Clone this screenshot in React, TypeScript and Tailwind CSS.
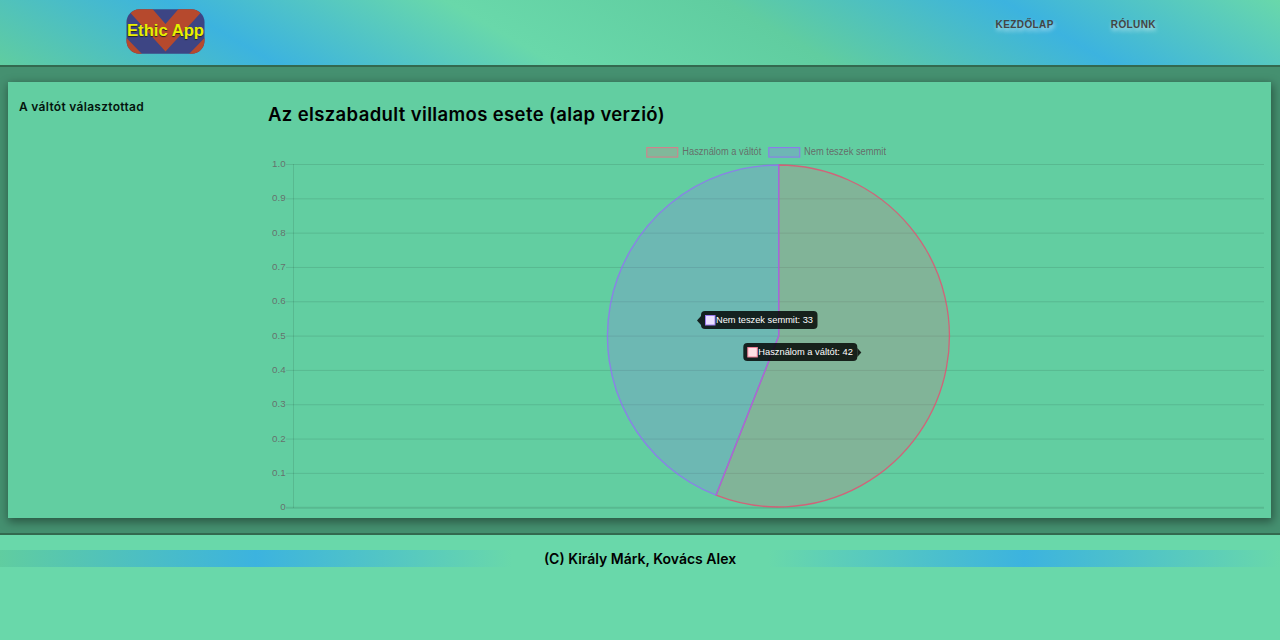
const ticks = ['1.0', '0.9', '0.8', '0.7', '0.6', '0.5', '0.4', '0.3', '0.2', '0.1', '0'];

function Logo() {
  return (
    <svg width="79" height="45" viewBox="0 0 79 45">
      <defs>
        <clipPath id="badge"><rect x="0.5" y="0.3" width="78" height="44.5" rx="13" /></clipPath>
      </defs>
      <g clipPath="url(#badge)">
        <rect width="79" height="45" fill="#3d4584" />
        <path d="M4.5 4L8.5 0H26.5L39.5 15L52.5 0H70.5L74.5 4L39.5 42.5Z" fill="#b6492d" />
        <path d="M0 28.5L16 45H0ZM79 28.5L63 45H79Z" fill="#b6492d" />
      </g>
      <text x="1" y="27" textLength="77" lengthAdjust="spacingAndGlyphs" fill="#e8f000" fontSize="17" fontWeight="700" className="font-['Liberation_Sans',sans-serif] [text-shadow:0px_1px_1px_#222]">Ethic App</text>
    </svg>
  );
}

function Tooltip({ x, y, w, label, fill, stroke, side }: { x: number; y: number; w: number; label: string; fill: string; stroke: string; side: 'left' | 'right' }) {
  const arrow = side === 'left'
    ? `M${x} ${y + 5}l-4 4.5l4 4.5Z`
    : `M${x + w} ${y + 5}l4 4.5l-4 4.5Z`;
  return (
    <g>
      <rect x={x} y={y} width={w} height="18" rx="4" fill="#000" fillOpacity="0.82" />
      <path d={arrow} fill="#000" fillOpacity="0.82" />
      <rect x={x + 4.5} y={y + 4.5} width="9.5" height="9.5" fill={fill} stroke={stroke} />
      <text x={x + 15} y={y + 11.6} textLength={w - 19.5} lengthAdjust="spacingAndGlyphs" fontSize="9.8" fill="#fff">{label}</text>
    </g>
  );
}

function Chart() {
  return (
    <svg width="1002" height="378" viewBox="264 138 1002 378" className="block font-['Liberation_Sans',sans-serif]">
      <g stroke="#000" strokeOpacity="0.1">
        {ticks.map((t, i) => (
          <line key={t} x1="286" x2="1264" y1={164.5 + i * 34.32} y2={164.5 + i * 34.32} strokeWidth={i === 10 ? 2 : 1} />
        ))}
        <line x1="293.5" x2="293.5" y1="164" y2="508" />
      </g>
      <g fontSize="9.8" fill="#666" fillOpacity="0.9" textAnchor="end">
        {ticks.map((t, i) => (
          <text key={t} x="285.7" y={167.1 + i * 34.32}>{t}</text>
        ))}
      </g>
      <g fontSize="10" fill="#666" fillOpacity="0.95">
        <rect x="646.8" y="147.6" width="31" height="9.5" fill="#ff6384" fillOpacity="0.2" stroke="#ff6384" strokeOpacity="0.75" />
        <text x="682.3" y="154.7" textLength="79" lengthAdjust="spacingAndGlyphs">Használom a váltót</text>
        <rect x="768.8" y="147.6" width="31" height="9.5" fill="#9966ff" fillOpacity="0.22" stroke="#9966ff" strokeOpacity="0.85" />
        <text x="804" y="154.7" textLength="82" lengthAdjust="spacingAndGlyphs">Nem teszek semmit</text>
      </g>
      <path d="M778.7 336V165A171 171 0 1 1 716 495.2Z" fill="#f05a7c" fillOpacity="0.22" stroke="#f0446e" strokeOpacity="0.75" strokeWidth="1.3" />
      <path d="M778.7 336L716 495.2A171 171 0 0 1 778.7 165Z" fill="#9966ff" fillOpacity="0.2" stroke="#9966ff" strokeOpacity="0.7" strokeWidth="1.4" />
      <Tooltip x={701} y={311} w={116.5} label="Nem teszek semmit: 33" fill="#ebe0ff" stroke="#9b7af0" side="left" />
      <Tooltip x={743.3} y={343} w={114} label="Használom a váltót: 42" fill="#ffe0e6" stroke="#f07f96" side="right" />
    </svg>
  );
}

export default function App() {
  return (
    <div className="flex h-[640px] w-[1280px] flex-col overflow-hidden bg-[#69d8aa] font-[Inter,sans-serif] text-[#04140d]">
      <header className="flex h-[65px] shrink-0 justify-between bg-[linear-gradient(30deg,#60cda0_0%,#3cb3df_20%,#69d8aa_40%,#60cda0_60%,#3cb3df_80%,#69d8aa_100%)] pl-[126px] pr-[124px] pt-[9px]">
        <Logo />
        <nav className="flex gap-[57px] pt-2 font-['Liberation_Sans',sans-serif] text-[10px] leading-[15px] font-bold tracking-[0.4px] text-[#444] [text-shadow:1px_3px_4px_rgba(255,255,255,0.65)]">
          <a>KEZDŐLAP</a>
          <a>RÓLUNK</a>
        </nav>
      </header>
      <main className="h-[470px] shrink-0 border-y-2 border-[#33694f] bg-[#459070] pl-2 pr-[9px] pt-[15px]">
        <section className="flex h-[436px] bg-[#62cea1] shadow-[1px_3px_9px_1px_rgba(0,0,0,0.4)]">
          <aside className="w-64 pl-[11px] pt-4">
            <p className="text-[12px] leading-[18px] font-semibold tracking-[0.3px] text-[#04140d]">A váltót választottad</p>
          </aside>
          <div className="flex flex-col">
            <h1 className="h-14 pl-1 pt-[19px] text-[18.5px] leading-[26px] font-semibold tracking-[0.37px] text-black">Az elszabadult villamos esete (alap verzió)</h1>
            <Chart />
          </div>
        </section>
      </main>
      <footer className="pt-[15px]">
        <p className="h-[17px] bg-[linear-gradient(90deg,#60cda0_0%,#3cb3df_20%,#69d8aa_40%,#69d8aa_60%,#3cb3df_80%,#69d8aa_100%)] text-center text-[14px] leading-[18px] font-semibold text-black">(C) Király Márk, Kovács Alex</p>
      </footer>
    </div>
  );
}
